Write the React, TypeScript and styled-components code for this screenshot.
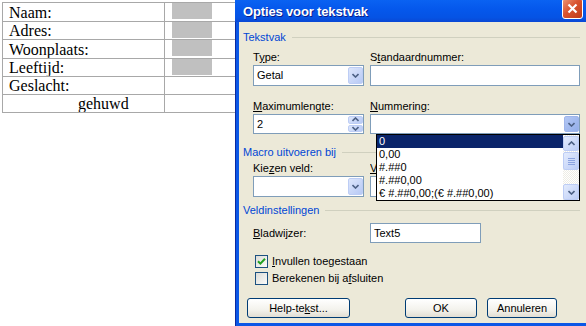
import React from "react"
import styled, { createGlobalStyle } from "styled-components"

const GlobalStyle = createGlobalStyle`
  html, body {
    margin: 0;
    padding: 0;
    background: #fff;
    overflow: hidden;
  }
`

const Page = styled.div`
  position: relative;
  width: 586px;
  height: 326px;
  overflow: hidden;
  background: #fff;
`

/* ---------- document table behind the dialog ---------- */

const DocTable = styled.table`
  margin: 2px 0 0 2px;
  width: 283px;
  table-layout: fixed;
  border-collapse: collapse;
  font-family: "Liberation Serif", "Times New Roman", serif;
  font-size: 16px;
  color: #000;
`

const Row = styled.tr<{ $h: number }>`
  height: ${p => p.$h}px;
`

const LabelCell = styled.td<{ $indent?: number }>`
  padding: 0 0 0 ${p => p.$indent ?? 6}px;
  border: 1px solid #a8a8a8;
  line-height: 17px;
  white-space: nowrap;
  overflow: hidden;
`

const ValueCell = styled.td`
  padding: 0;
  border: 1px solid #a8a8a8;
  vertical-align: top;
`

const Shade = styled.span`
  display: block;
  width: 40px;
  height: 16px;
  margin-left: 7px;
  background: #c0c0c0;
`

/* ---------- dialog window ---------- */

const Window = styled.div`
  position: absolute;
  left: 235px;
  top: 0;
  width: 356px;
  height: 326px;
  display: flex;
  flex-direction: column;
  background: #0b57e6;
  box-shadow: inset 1px 0 #0a2aa0;
  font-family: "Liberation Sans", Arial, sans-serif;
  font-size: 11px;
  color: #000;
`

const TitleBar = styled.div`
  height: 22px;
  display: flex;
  align-items: center;
  justify-content: space-between;
  padding: 0 8px;
  background: linear-gradient(#0a62f2, #0558ec 40%, #0553e4 80%, #0a48d4);
`

const Title = styled.span`
  font-family: "Liberation Sans", Arial, sans-serif;
  font-weight: bold;
  font-size: 13px;
  color: #fff;
  text-shadow: 1px 1px #0a1c8a;
  letter-spacing: -0.15px;
`

const CloseButton = styled.div`
  align-self: flex-start;
  margin-top: -2px;
  width: 21px;
  height: 21px;
  box-sizing: border-box;
  border: 1px solid #fff;
  border-radius: 3px;
  background: linear-gradient(135deg, #eb9677, #d9532f 45%, #bd3a18);
  display: flex;
  align-items: center;
  justify-content: center;
`

const Client = styled.div`
  flex: 1;
  margin: 0 4px 3px 4px;
  padding: 9px 7px 0 4px;
  background: #ece9d8;
`

const GroupHead = styled.div<{ $mt?: number }>`
  display: flex;
  align-items: center;
  gap: 6px;
  height: 13px;
  line-height: 13px;
  margin-top: ${p => p.$mt ?? 0}px;
  color: #0046d5;

  &::after {
    content: "";
    flex: 1;
    height: 1px;
    background: #d0d0bf;
  }
`

const FieldGrid = styled.div<{ $mt: number }>`
  display: grid;
  grid-template-columns: 111px 210px;
  column-gap: 6px;
  row-gap: 14px;
  margin: ${p => p.$mt}px 0 0 10px;
`

const Field = styled.div<{ $over?: boolean }>`
  position: relative;
  display: flex;
  flex-direction: column;
  gap: 1px;
  z-index: ${p => (p.$over ? 5 : 1)};
`

const Label = styled.div<{ $clip?: boolean }>`
  height: 13px;
  line-height: 13px;
  white-space: nowrap;
  overflow: ${p => (p.$clip ? "hidden" : "visible")};
  width: ${p => (p.$clip ? "6px" : "auto")};
`

const Key = styled.span`
  text-decoration: underline;
  text-underline-offset: 1px;
`

const Box = styled.div<{ $h: number }>`
  position: relative;
  height: ${p => p.$h}px;
  box-sizing: border-box;
  border: 1px solid #7f9db9;
  background: #fff;
  display: flex;
  align-items: center;
  padding-left: 3px;
  line-height: 13px;
`

const BoxText = styled.span`
  flex: 1;
`

const ArrowButton = styled.div<{ $active?: boolean }>`
  align-self: stretch;
  width: 15px;
  margin: 1px 0;
  box-sizing: border-box;
  border: 1px solid ${p => (p.$active ? "#9fb5ea" : "#bdcdf5")};
  border-radius: 2px;
  background: ${p =>
    p.$active
      ? "linear-gradient(135deg, #b3c7f4, #93aeea)"
      : "linear-gradient(135deg, #dde6fb, #b7c9f5)"};
  display: flex;
  align-items: center;
  justify-content: center;
`

const SpinStack = styled.div`
  align-self: stretch;
  width: 15px;
  margin: 1px 0;
  display: flex;
  flex-direction: column;
  gap: 1px;
`

const SpinHalf = styled.div`
  flex: 1;
  box-sizing: border-box;
  border: 1px solid #bdcdf5;
  border-radius: 2px;
  background: linear-gradient(135deg, #dde6fb, #b7c9f5);
  display: flex;
  align-items: center;
  justify-content: center;
`

/* ---------- open drop-down list ---------- */

const DropList = styled.div`
  position: absolute;
  top: 100%;
  left: 6px;
  right: 0;
  height: 67px;
  box-sizing: border-box;
  border: 1px solid #000;
  background: #fff;
  display: flex;
`

const Items = styled.div`
  flex: 1;
  display: flex;
  flex-direction: column;
`

const Item = styled.div<{ $selected?: boolean }>`
  height: 13px;
  line-height: 13px;
  padding-left: 2px;
  white-space: nowrap;
  overflow: hidden;
  background: ${p => (p.$selected ? "#0a246a" : "transparent")};
  color: ${p => (p.$selected ? "#fff" : "#000")};
`

const ScrollBar = styled.div`
  width: 16px;
  padding-top: 1px;
  display: flex;
  flex-direction: column;
  background: repeating-conic-gradient(#fff 0 25%, #eeede5 0 50%) 0 0 / 2px 2px;
`

const ScrollBtn = styled.div<{ $h: number; $mt?: number }>`
  height: ${p => p.$h}px;
  margin-top: ${p => p.$mt ?? 0}px;
  box-sizing: border-box;
  border: 1px solid #bdcdf5;
  border-radius: 2px;
  background: linear-gradient(135deg, #e3ebfd, #bccdf6);
  display: flex;
  align-items: center;
  justify-content: center;
`

const Track = styled.div`
  flex: 1;
`

/* ---------- rows below ---------- */

const InlineRow = styled.div`
  display: grid;
  grid-template-columns: 111px 111px;
  column-gap: 6px;
  align-items: center;
  margin: 6px 0 0 10px;
`

const Checks = styled.div`
  display: flex;
  flex-direction: column;
  gap: 4px;
  margin: 12px 0 0 12px;
`

const CheckRow = styled.label`
  display: flex;
  align-items: center;
  gap: 4px;
  height: 13px;
  line-height: 13px;
`

const CheckBox = styled.span`
  width: 13px;
  height: 13px;
  box-sizing: border-box;
  border: 1px solid #1c5180;
  background: linear-gradient(135deg, #dcdcd7, #fbfbf9);
  display: flex;
  align-items: center;
  justify-content: center;
`

const ButtonRow = styled.div`
  display: flex;
  gap: 10px;
  margin: 13px 23px 0 4px;
`

const Button = styled.div<{ $w: number; $push?: boolean }>`
  width: ${p => p.$w}px;
  height: 20px;
  margin-left: ${p => (p.$push ? "auto" : "0")};
  box-sizing: border-box;
  border: 1px solid #003c74;
  border-radius: 3px;
  background: linear-gradient(#ffffff, #f3f2ec 60%, #e2ded3);
  display: flex;
  align-items: center;
  justify-content: center;
  line-height: 13px;
`

/* ---------- small drawings ---------- */

const Chevron = ({ up }: { up?: boolean }) => (
  <svg width="7" height="5" viewBox="0 0 7 5">
    <path
      d={up ? "M0.5 4 L3.5 1 L6.5 4" : "M0.5 1 L3.5 4 L6.5 1"}
      fill="none"
      stroke="#4d6185"
      strokeWidth="1.6"
    />
  </svg>
)

const Grip = () => (
  <svg width="7" height="7" viewBox="0 0 7 7">
    {[0.5, 2.5, 4.5, 6.5].map(y => (
      <line key={y} x1="0" x2="7" y1={y} y2={y} stroke="#8ca4e0" strokeWidth="1" />
    ))}
  </svg>
)

const Combo = ({ value, h = 21, active }: { value?: string; h?: number; active?: boolean }) => (
  <Box $h={h}>
    <BoxText>{value}</BoxText>
    <ArrowButton $active={active}>
      <Chevron />
    </ArrowButton>
  </Box>
)

const rows = [
  { label: "Naam:", shade: true, h: 19 },
  { label: "Adres:", shade: true, h: 18 },
  { label: "Woonplaats:", shade: true, h: 19 },
  { label: "Leeftijd:", shade: true, h: 18 },
  { label: "Geslacht:", shade: false, h: 18 },
  { label: "gehuwd", shade: false, h: 18, indent: 75 },
]

const formats = ["0", "0,00", "#.##0", "#.##0,00", "€ #.##0,00;(€ #.##0,00)"]

export default function App() {
  return (
    <Page>
      <GlobalStyle />
      <DocTable>
        <colgroup>
          <col style={{ width: 162 }} />
          <col />
        </colgroup>
        <tbody>
          {rows.map(r => (
            <Row key={r.label} $h={r.h}>
              <LabelCell $indent={r.indent}>{r.label}</LabelCell>
              <ValueCell>{r.shade && <Shade />}</ValueCell>
            </Row>
          ))}
        </tbody>
      </DocTable>

      <Window>
        <TitleBar>
          <Title>Opties voor tekstvak</Title>
          <CloseButton>
            <svg width="11" height="11" viewBox="0 0 11 11">
              <path d="M1.5 1.5 L9.5 9.5 M9.5 1.5 L1.5 9.5" stroke="#fff" strokeWidth="2.2" />
            </svg>
          </CloseButton>
        </TitleBar>

        <Client>
          <GroupHead>Tekstvak</GroupHead>
          <FieldGrid $mt={7}>
            <Field>
              <Label>T<Key>y</Key>pe:</Label>
              <Combo value="Getal" />
            </Field>
            <Field>
              <Label>S<Key>t</Key>andaardnummer:</Label>
              <Box $h={21} />
            </Field>
            <Field>
              <Label><Key>M</Key>aximumlengte:</Label>
              <Box $h={20}>
                <BoxText>2</BoxText>
                <SpinStack>
                  <SpinHalf><Chevron up /></SpinHalf>
                  <SpinHalf><Chevron /></SpinHalf>
                </SpinStack>
              </Box>
            </Field>
            <Field $over>
              <Label><Key>N</Key>ummering:</Label>
              <Combo h={20} active />
              <DropList>
                <Items>
                  {formats.map((f, i) => (
                    <Item key={f} $selected={i === 0}>{f}</Item>
                  ))}
                </Items>
                <ScrollBar>
                  <ScrollBtn $h={15}><Chevron up /></ScrollBtn>
                  <ScrollBtn $h={18} $mt={1}><Grip /></ScrollBtn>
                  <Track />
                  <ScrollBtn $h={16}><Chevron /></ScrollBtn>
                </ScrollBar>
              </DropList>
            </Field>
          </FieldGrid>

          <GroupHead $mt={12}>Macro uitvoeren bij</GroupHead>
          <FieldGrid $mt={3}>
            <Field>
              <Label>Kie<Key>z</Key>en veld:</Label>
              <Combo />
            </Field>
            <Field>
              <Label $clip><Key>V</Key></Label>
              <Combo />
            </Field>
          </FieldGrid>

          <GroupHead $mt={7}>Veldinstellingen</GroupHead>
          <InlineRow>
            <Label><Key>B</Key>ladwijzer:</Label>
            <Box $h={20}>
              <BoxText>Text5</BoxText>
            </Box>
          </InlineRow>

          <Checks>
            <CheckRow>
              <CheckBox>
                <svg width="9" height="9" viewBox="0 0 9 9">
                  <path d="M1 4.2 L3.4 6.6 L8 1.8" fill="none" stroke="#21a121" strokeWidth="2" />
                </svg>
              </CheckBox>
              <span><Key>I</Key>nvullen toegestaan</span>
            </CheckRow>
            <CheckRow>
              <CheckBox />
              <span>Berekenen bij a<Key>f</Key>sluiten</span>
            </CheckRow>
          </Checks>

          <ButtonRow>
            <Button $w={103}>Help-te<Key>k</Key>st...</Button>
            <Button $w={72} $push>OK</Button>
            <Button $w={70}>Annuleren</Button>
          </ButtonRow>
        </Client>
      </Window>
    </Page>
  )
}
